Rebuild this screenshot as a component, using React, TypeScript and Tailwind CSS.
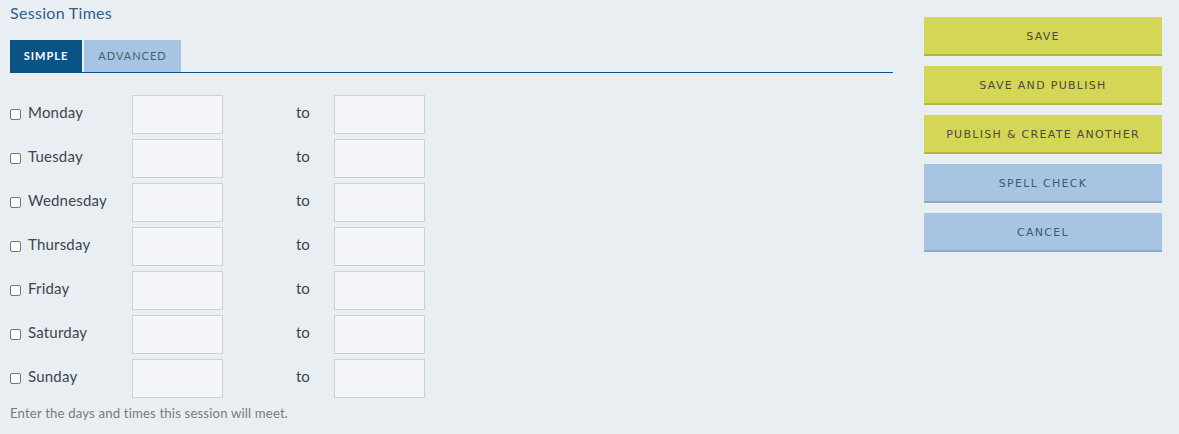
import React from "react";

const days = ["Monday", "Tuesday", "Wednesday", "Thursday", "Friday", "Saturday", "Sunday"];

function Btn({ label, yellow }: { label: string; yellow?: boolean }) {
  return (
    <button
      className={
        yellow
          ? "h-[39px] w-full pt-[3px] bg-[#d4d656] border-b-2 border-[#b4b643] text-[#4b4a3c] text-[11px] tracking-[1.3px] font-['DejaVu_Sans',sans-serif]"
          : "h-[39px] w-full pt-[3px] bg-[#a7c5e3] border-b-2 border-[#8ea9c9] text-[#4a5566] text-[11px] tracking-[1.3px] font-['DejaVu_Sans',sans-serif]"
      }
    >
      {label}
    </button>
  );
}

export default function App() {
  return (
    <div className="w-[1179px] h-[434px] bg-[#e9eef2] font-['Lato',sans-serif] flex">
      <div className="w-[893px] pl-[10px] flex flex-col">
        <div className="h-[28px] pt-[2px] text-[16px] tracking-[0.3px] text-[#2f5f8c] leading-[22px]">Session Times</div>
        <div className="mt-[12px] flex gap-[2px] border-b border-[#0b5285] h-[33px]">
          <div className="w-[72px] h-[32px] bg-[#0b5285] text-white text-[11px] font-bold tracking-[1px] flex items-center justify-center">
            SIMPLE
          </div>
          <div className="w-[97px] h-[32px] bg-[#a7c5e3] text-[#4d5b6b] text-[11px] tracking-[1px] flex items-center justify-center">
            ADVANCED
          </div>
        </div>
        <div className="mt-[22px] flex flex-col gap-[5px]">
          {days.map((d) => (
            <div key={d} className="flex items-center h-[39px]">
              <div className="w-[122px] flex items-center pb-[4px]">
                <span className="w-[11px] h-[11px] border border-[#767676] rounded-[2px] bg-white mt-[3px]" />
                <span className="ml-[7px] text-[15px] tracking-[0.2px] text-[#3d4550]">{d}</span>
              </div>
              <div className="w-[91px] h-[39px] bg-[#f3f5f9] border border-[#c9d2dc]" />
              <div className="w-[111px] flex pb-[4px]">
                <span className="ml-[73px] text-[15px] text-[#3d4550]">to</span>
              </div>
              <div className="w-[91px] h-[39px] bg-[#f3f5f9] border border-[#c9d2dc]" />
            </div>
          ))}
        </div>
        <div className="mt-[6px] text-[13.2px] tracking-[0.15px] text-[#7b7b7b]">Enter the days and times this session will meet.</div>
      </div>
      <div className="ml-[31px] w-[238px] pt-[17px] flex flex-col gap-[10px]">
        <Btn label="SAVE" yellow />
        <Btn label="SAVE AND PUBLISH" yellow />
        <Btn label="PUBLISH & CREATE ANOTHER" yellow />
        <Btn label="SPELL CHECK" />
        <Btn label="CANCEL" />
      </div>
    </div>
  );
}
